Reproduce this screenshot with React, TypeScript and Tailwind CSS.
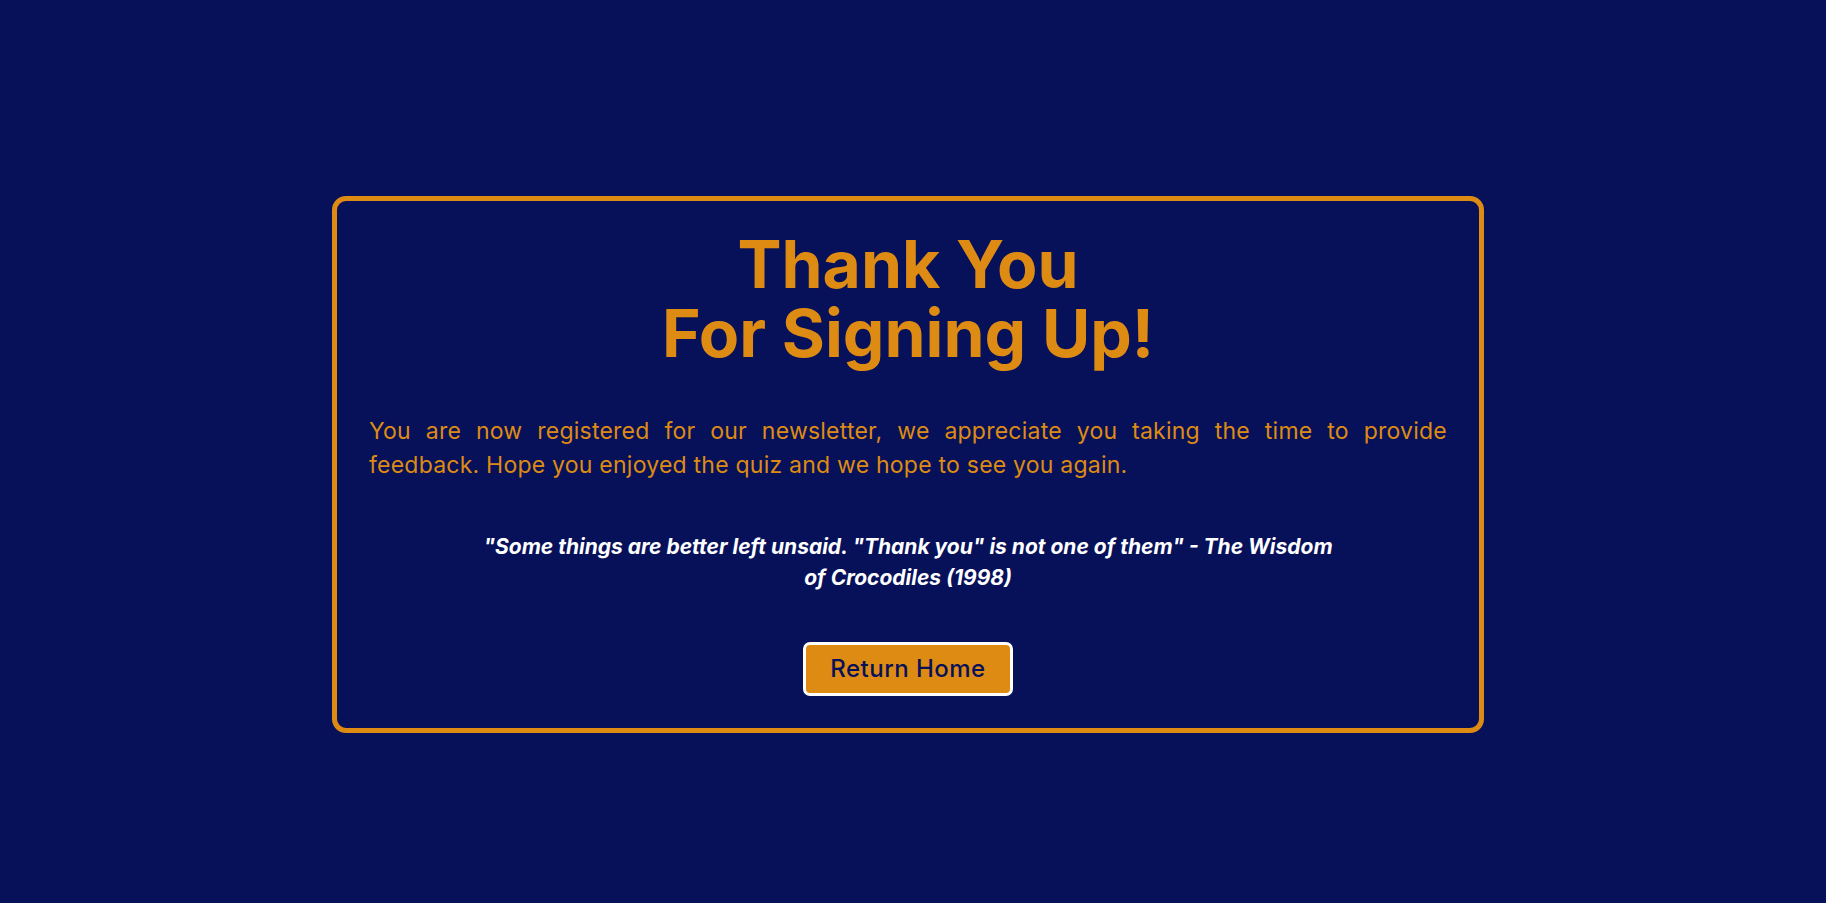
import React from 'react';

export default function App() {
    return (
        <div
            className="min-h-screen w-full bg-[#07115a] flex items-center justify-center pt-[26px] pr-[10px]"
            style={{ fontFamily: 'Inter, "Noto Sans", sans-serif' }}
        >
            <div className="w-[1152px] border-[5px] border-[#de8b13] rounded-[14px] px-8 pt-[29px] pb-8 flex flex-col items-center gap-[48px]">
                <h1 className="text-[#de8b13] text-[66px] leading-[68.5px] font-bold text-center">
                    Thank You
                    <br />
                    For Signing Up!
                </h1>

                <p className="w-full text-[#de8b13] text-[23px] leading-[33.6px] text-justify tracking-[0.01em]">
                    You are now registered for our newsletter, we appreciate you taking the time to provide feedback. Hope you enjoyed the quiz and we hope to see you again.
                </p>

                <p className="text-white text-[21px] leading-[31.5px] font-bold italic text-center">
                    "Some things are better left unsaid. "Thank you" is not one of them" - The Wisdom
                    <br />
                    of Crocodiles (1998)
                </p>

                <button className="w-[210px] h-[54px] bg-[#de8b13] border-[3px] border-white rounded-[7px] text-[#07115a] text-[24px] font-medium tracking-[0.02em]">
                    Return Home
                </button>
            </div>
        </div>
    );
}
